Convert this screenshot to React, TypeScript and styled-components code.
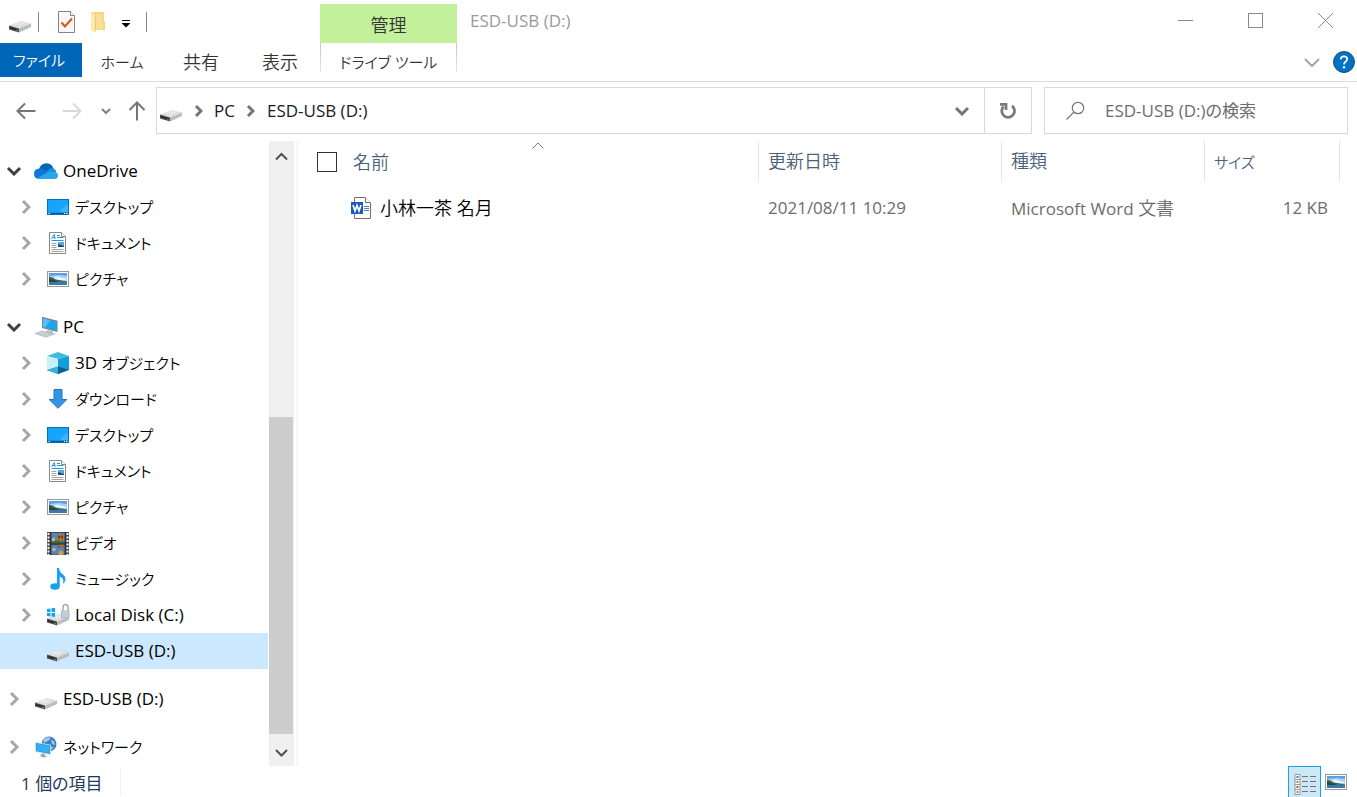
import React, { useState } from "react";
import styled, { createGlobalStyle, css } from "styled-components";

const Global = createGlobalStyle`
  *, *::before, *::after { box-sizing: border-box; }
  body { margin: 0; background: #fff; }
  button, input, table {
    font: inherit;
    color: inherit;
  }
  button {
    border: 0;
    padding: 0;
    background: none;
    cursor: default;
    white-space: nowrap;
  }
  svg { display: block; flex: none; }
`;

const Window = styled.div`
  display: flex;
  flex-direction: column;
  min-height: 100vh;
  overflow: hidden;
  background: #fff;
  color: #000;
  font-family: "Open Sans", "Noto Sans CJK JP", sans-serif;
  font-size: 17px;
  line-height: 24px;
  font-feature-settings: "palt";
`;

const kana = css`
  font-size: 15px;
  font-weight: 350;
`;

const Label = styled.span<{ $kana?: boolean }>`
  white-space: pre;
  ${(p) => p.$kana && kana}
`;

const Han = styled.span`
  font-size: 18px;
  font-weight: 350;
`;

/* ---------- ribbon ---------- */

const Ribbon = styled.header`
  display: grid;
  grid-template-columns: 320px 137px 1fr;
  height: 82px;
  border-bottom: 1px solid #dadbdc;
`;

const RibbonColumn = styled.div`
  display: grid;
  grid-template-rows: 43px 34px;
`;

const QuickAccess = styled.div`
  display: flex;
  align-items: center;
  padding-left: 9px;
`;

const Divider = styled.i<{ $before: number; $after: number }>`
  width: 1px;
  height: 20px;
  margin: 0 ${(p) => p.$after}px 0 ${(p) => p.$before}px;
  background: #868686;
`;

const QuickButton = styled.button<{ $width: number }>`
  display: flex;
  justify-content: center;
  width: ${(p) => p.$width}px;
`;

const Tabs = styled.div`
  display: flex;
  gap: 1px;
`;

const Tab = styled.button`
  width: 78px;
  padding-top: 4px;
  color: #333;
`;

const FileTab = styled(Tab)`
  ${kana}
  width: 82px;
  padding: 0 4px 0 0;
  background: #0067b8;
  color: #fff;
`;

const ContextTitle = styled.div`
  display: flex;
  align-items: center;
  justify-content: center;
  margin-top: 4px;
  padding-top: 2px;
  background: #c3f09b;
  color: #333;
`;

const ContextTab = styled(Tab)`
  ${kana}
  width: auto;
  background:
    linear-gradient(#c4c4c4, #e6e6e6) left top / 1px 29px no-repeat,
    linear-gradient(#c4c4c4, #e6e6e6) right top / 1px 29px no-repeat;
`;

const TitleBar = styled.div`
  display: flex;
  align-items: center;
  justify-content: space-between;
  padding: 0 0 2px 13px;
  color: #9a9a9a;
`;

const WindowControls = styled.div`
  display: flex;
  gap: 6px;
`;

const ControlButton = styled.button`
  display: grid;
  place-items: center;
  width: 64px;
  height: 40px;
`;

const RibbonTools = styled.div`
  display: flex;
  align-items: center;
  justify-content: flex-end;
  gap: 12px;
  padding: 4px 2px 0 0;
`;

/* ---------- address bar ---------- */

const AddressRow = styled.div`
  display: flex;
  padding: 5px 9px 7px 16px;
`;

const History = styled.div`
  display: grid;
  grid-template-columns: 46px 38px 27px 20px;
  align-items: center;
  justify-items: start;
  margin-right: 9px;
`;

const AddressBox = styled.div`
  display: flex;
  flex: 1;
  align-items: center;
  height: 47px;
  margin-right: 12px;
  padding-left: 3px;
  border: 1px solid #d9d9d9;
`;

const Crumb = styled.button`
  color: #1a1a1a;
`;

const CrumbArrow = styled.span`
  display: grid;
  place-items: center;
  width: 32px;
`;

const Dropdown = styled.button`
  display: grid;
  place-items: center;
  width: 44px;
  height: 100%;
  margin-left: auto;
`;

const Refresh = styled.button`
  display: grid;
  place-items: center;
  width: 47px;
  height: 100%;
  border-left: 1px solid #d9d9d9;
`;

const SearchBox = styled.label`
  display: flex;
  align-items: center;
  gap: 20px;
  width: 304px;
  padding-left: 20px;
  border: 1px solid #d9d9d9;
`;

const SearchInput = styled.input`
  flex: 1;
  min-width: 0;
  padding: 0;
  border: 0;
  outline: 0;
  background: none;
  &::placeholder { color: #6d6d6d; opacity: 1; }
`;

/* ---------- body ---------- */

const Body = styled.div`
  display: flex;
  flex: 1;
`;

const Tree = styled.nav`
  display: flex;
  flex-direction: column;
  gap: 12px;
  width: 268px;
  padding-top: 12px;
`;

const Group = styled.ul`
  margin: 0;
  padding: 0;
  list-style: none;
`;

const TreeRow = styled.button<{ $level: number; $selected?: boolean }>`
  display: flex;
  align-items: center;
  width: 100%;
  height: 36px;
  padding-left: ${(p) => 4 + p.$level * 12}px;
  background: ${(p) => (p.$selected ? "#cce8ff" : "none")};
`;

const Twisty = styled.span`
  display: grid;
  place-items: center;
  width: 20px;
  margin-right: 10px;
`;

const TreeIcon = styled.span`
  display: grid;
  place-items: center;
  width: 24px;
  margin-right: 5px;
`;

const ScrollBar = styled.div`
  display: flex;
  flex-direction: column;
  width: 25px;
  margin: 0 2px 0 1px;
  background: #f0f0f0;
`;

const ScrollButton = styled.button<{ $down?: boolean }>`
  display: grid;
  place-items: center;
  height: 32px;
  padding-top: ${(p) => (p.$down ? 6 : 0)}px;
`;

const ScrollTrack = styled.div`
  display: grid;
  flex: 1;
  grid-template-rows: 10fr 13fr;
`;

const Thumb = styled.div`
  grid-row: 2;
  width: 24px;
  background: #cdcdcd;
`;

const Files = styled.main`
  flex: 1;
  padding-left: 19px;
  border-left: 2px solid #f7f7f7;
`;

const FileTable = styled.table`
  width: 100%;
  table-layout: fixed;
  border-collapse: separate;
  border-spacing: 0;
`;

const Column = styled.col<{ $width?: number }>`
  ${(p) => p.$width && css`width: ${p.$width}px;`}
`;

const HeadCell = styled.th<{ $first?: boolean }>`
  position: relative;
  height: 41px;
  padding: ${(p) => (p.$first ? "0" : "0 0 0 9px")};
  border-right: 1px solid #e5e5e5;
  color: #4c607a;
  font-weight: 400;
  text-align: left;
`;

const NameHead = styled.div`
  display: flex;
  align-items: center;
  gap: 16px;
`;

const SelectAll = styled.input`
  appearance: none;
  width: 20px;
  height: 20px;
  margin: 0;
  border: 1px solid #333;
  background: #fff;
`;

const SortMark = styled.span`
  position: absolute;
  top: 0;
  left: 50%;
  transform: translateX(-50%);
`;

const Cell = styled.td<{ $right?: boolean }>`
  height: 52px;
  padding: 0 12px 0 9px;
  color: #6d6d6d;
  text-align: ${(p) => (p.$right ? "right" : "left")};
  white-space: nowrap;
`;

const NameCell = styled(Cell)`
  padding-left: 34px;
  color: #000;
`;

const FileName = styled.div`
  display: flex;
  align-items: center;
  gap: 8px;
`;

/* ---------- status bar ---------- */

const StatusBar = styled.footer`
  display: flex;
  align-items: center;
  height: 31px;
  padding: 0 10px 0 21px;
  color: #1e395b;
`;

const Count = styled.span`
  width: 100px;
  margin-right: auto;
  padding-top: 4px;
  border-right: 1px solid #f0f0f0;
`;

const ViewButton = styled.button<{ $active?: boolean }>`
  display: grid;
  place-items: center;
  height: 31px;
  ${(p) =>
    p.$active
      ? css`
          width: 33px;
          margin-right: 4px;
          padding-top: 6px;
          border: 1px solid #1ba1e8;
          border-bottom: 0;
          background: #cbe8f6;
        `
      : css`
          width: 22px;
        `}
`;

/* ---------- icons ---------- */

type ChevronProps = { dir: "up" | "down" | "right"; size: number; color: string; weight?: number };

const Chevron = ({ dir, size, color, weight = 2 }: ChevronProps) => {
  const long = size;
  const short = size / 2;
  const w = (dir === "right" ? short : long) + 4;
  const h = (dir === "right" ? long : short) + 4;
  const points =
    dir === "right"
      ? `2,2 ${short + 2},${short + 2} 2,${long + 2}`
      : dir === "down"
        ? `2,2 ${short + 2},${short + 2} ${long + 2},2`
        : `2,${short + 2} ${short + 2},2 ${long + 2},${short + 2}`;
  return (
    <svg width={w} height={h} viewBox={`0 0 ${w} ${h}`} fill="none" stroke={color} strokeWidth={weight}>
      <polyline points={points} />
    </svg>
  );
};

const DriveShape = () => (
  <>
    <path d="M0 5.500 12 1 22 3.500 10 8.500Z" fill="#dfdfdd" />
    <path d="M0 5.500 10 8.500V12.500L0 9.500Z" fill="#5a5a5a" />
    <path d="M10 8.500 22 3.500V7L10 12.500Z" fill="#bcbcba" />
    <path d="M.5 6.500 9.500 9V11.500L.5 8.700Z" fill="#333" />
    <path d="M7 9.500 9 10V11.500L7 11Z" fill="#2f9a58" />
    <path d="M6 4.500 12 2.500M9 5.500 15 3" stroke="#f0f0ef" strokeWidth="1" />
  </>
);

const DriveIcon = () => (
  <svg width="22" height="22" viewBox="0 0 22 22">
    <g transform="translate(0 9)">
      <DriveShape />
    </g>
  </svg>
);

const DiskIcon = () => (
  <svg width="24" height="24" viewBox="0 0 24 24">
    <g transform="translate(1 10)">
      <DriveShape />
    </g>
    <path d="M1 6 4.500 5.500V9H1ZM5.500 5.300 9 4.800V9H5.500ZM1 10H4.500V13.500L1 13ZM5.500 10H9V14L5.500 13.600Z" fill="#0ea5f0" />
    <path d="M17 8V4.500Q17 1.500 19.500 1.500T22 4.500V8" fill="none" stroke="#a9a9a9" strokeWidth="1.500" />
    <path d="M15 7.500H23.500V14.500L15 15.500Z" fill="#a9bccd" />
    <path d="M16 9H22.500M16 11H22.500M16 13H22.500" stroke="#d7e1ea" strokeWidth="1" />
  </svg>
);

const CheckDocIcon = () => (
  <svg width="18" height="22" viewBox="0 0 18 22">
    <path d="M.5.5H12.500L16.500 4.500V21.500H.5Z" fill="#f8f8fa" stroke="#858585" />
    <path d="M12.500.5V4.500H16.500" fill="#fff" stroke="#858585" />
    <path d="M3.500 11.500 7 15.500 14 7.500" fill="none" stroke="#e25012" strokeWidth="2" />
  </svg>
);

const FolderIcon = () => (
  <svg width="14" height="22" viewBox="0 0 14 22">
    <path d="M0 1H13V10L14 11V19H5L4 21 0 19Z" fill="#f7d581" />
    <path d="M0 1 4 3.500V21.500L0 19Z" fill="#ffe9b0" />
    <path d="M4 3.500 5 4V18L4 21Z" fill="#efc766" />
    <path d="M5 3H11V10L12 11V18H5Z" fill="#fcdf97" />
  </svg>
);

const MoreIcon = () => (
  <svg width="10" height="14" viewBox="0 0 10 14">
    <path d="M1 5.500H9" stroke="#000" />
    <path d="M0.500 8H9.500L5 12.500Z" fill="#000" />
  </svg>
);

const ArrowIcon = ({ dir, color }: { dir: "left" | "right" | "up"; color: string }) => {
  const angle = dir === "left" ? 0 : dir === "up" ? 90 : 180;
  return (
    <svg width="20" height="20" viewBox="0 0 20 20" fill="none" stroke={color} strokeWidth="2">
      <path d="M1.500 10H19.500M9 2.500 1.500 10 9 17.500" transform={`rotate(${angle} 10 10)`} />
    </svg>
  );
};

const RefreshIcon = () => (
  <svg width="18" height="18" viewBox="0 0 18 18" fill="none" stroke="#7a7a7a" strokeWidth="2.800">
    <path d="M13 3.800A6.400 6.400 0 1 1 4.500 4.500" />
    <path d="M1 2.400H7V8" />
  </svg>
);

const SearchIcon = () => (
  <svg width="20" height="20" viewBox="0 0 20 20" fill="none" stroke="#777" strokeWidth="1.200">
    <circle cx="13" cy="7" r="5.700" />
    <path d="M9 11 1.500 18.500" />
  </svg>
);

const HelpIcon = () => (
  <svg width="22" height="22" viewBox="0 0 22 22">
    <circle cx="11" cy="11" r="10.500" fill="#0072c6" stroke="#1f4e79" />
    <path d="M7.800 8.200Q7.800 5.300 11 5.300T14.200 8Q14.200 9.500 12.500 10.700T11 13.500" fill="none" stroke="#fff" strokeWidth="1.800" />
    <circle cx="11" cy="16.200" r="1.200" fill="#fff" />
  </svg>
);

const CloudIcon = () => (
  <svg width="24" height="16" viewBox="0 0 24 16">
    <path d="M5 6Q7 .5 12.500.3 18 .5 19.500 6L12 11 4 7Z" fill="#0364b8" />
    <path d="M5 16Q0 15.500 0 10.800 0 6 5.500 5.500 8.500 5 12 8L17 11 8 15Z" fill="#0f78d4" />
    <path d="M12.500 8.500Q14.500 5 18.500 5.300 22 6 22.300 9.500L14 12Z" fill="#1490df" />
    <path d="M3.500 15 15 8.800Q18 8.500 20.500 9 24 9.800 24 12.500 24 16 20 16H6Q4 16 3.500 15Z" fill="#28a8ea" />
  </svg>
);

const DesktopIcon = () => (
  <svg width="22" height="16" viewBox="0 0 22 16">
    <rect x=".5" y=".5" width="21" height="15" fill="#15a5fb" stroke="#0b6fb5" />
    <path d="M21 6Q14 9 13 13H21Z" fill="#3bb4fb" />
    <path d="M1 14.500H21" stroke="#0a5c99" strokeWidth="1.500" />
    <path d="M1.500 14.500H3M17 14.500H18M19 14.500H20.500" stroke="#fff" strokeWidth="1" />
  </svg>
);

const DocumentIcon = () => (
  <svg width="18" height="22" viewBox="0 0 18 22">
    <path d="M.5.5H12.500L16.500 4.500V21.500H.5Z" fill="#fff" stroke="#8a8a8a" />
    <path d="M12.500.5V4.500H16.500" fill="#fff" stroke="#8a8a8a" />
    <path d="M2.500 7 5.300 2.500 6.200 7M3.500 5.500H6M8 3.500H11M8 5.500H14.500M2.500 8.500H14.500" fill="none" stroke="#1c9be6" />
    <path d="M2.500 11.500H7.500M2.500 13.500H7.500M2.500 15.500H7.500M2.500 17.500H14.500M2.500 19.500H14.500" stroke="#a3a3a3" />
    <rect x="9" y="10" width="6" height="5" fill="#5aa6e0" />
    <path d="M9 12 15 14V15H9Z" fill="#1e4d6b" />
  </svg>
);

const PictureIcon = () => (
  <svg width="22" height="16" viewBox="0 0 22 16">
    <rect x=".5" y=".5" width="21" height="15" fill="#fff" stroke="#9a9a9a" />
    <rect x="2" y="2" width="18" height="12" fill="#a9d4f5" />
    <path d="M2 2H20V5L12 4 2 5Z" fill="#5b9fe3" />
    <path d="M7 7Q9 4.500 12 6T17 7L20 9H7Z" fill="#eaf6fd" />
    <path d="M2 5.500Q6 6.500 9 8.500L20 10.500V11.500H2Z" fill="#3f6248" />
    <path d="M2 8.500 9 10 20 11V14H2Z" fill="#3a79a8" />
    <path d="M2 8 8 9.500 12 11H2Z" fill="#2a453e" />
  </svg>
);

const PcIcon = () => (
  <svg width="24" height="22" viewBox="0 0 24 22">
    <path d="M8 .8 23.500 4.800V16L8 12Z" fill="#6f8796" />
    <path d="M9 2.300 22.300 5.800V14.500L9 11.200Z" fill="#1ea4ee" />
    <path d="M9 2.300 16 4.200 11 11.600 9 11.200Z" fill="#59c0f7" />
    <path d="M14 14 19 15V17L23 18 18 19 11 16Z" fill="#b9c2c8" />
    <path d="M1 17.500 8 15 19 18.500 12 21.300Z" fill="#d5dadd" stroke="#a5adb2" strokeWidth=".6" />
    <path d="M4 17.600 14 20.400M7 16.400 16.500 19.200" stroke="#98a1a6" strokeWidth=".7" strokeDasharray="1.500 1" />
  </svg>
);

const CubeIcon = () => (
  <svg width="22" height="22" viewBox="0 0 22 22">
    <path d="M11 0 22 4 11 7 0 4Z" fill="#41bce0" />
    <path d="M0 4 11 7V22L0 18Z" fill="#a6e6f2" />
    <path d="M11 7 22 4V18L11 22Z" fill="#12a0dc" />
    <path d="M11 14.500 22 17.800 11 22 0 18Z" fill="#0c5f8c" />
    <path d="M0 4 11 7V14.500L0 18Z" fill="#c7f2f8" />
    <path d="M0 18 11 14.500V22Z" fill="#38b3d6" />
  </svg>
);

const DownloadIcon = () => (
  <svg width="20" height="20" viewBox="0 0 20 20">
    <path d="M6 .5H14V10.500H18.800L10 19.300 1.200 10.500H6Z" fill="#3495e8" stroke="#2573bd" />
  </svg>
);

const VideoIcon = () => (
  <svg width="22" height="23" viewBox="0 0 22 23">
    <rect width="22" height="23" fill="#4b4b4b" />
    <path d="M1.500 1V23M20.500 1V23" stroke="#f2f2f2" strokeWidth="2" strokeDasharray="2 1.500" />
    <rect x="4" y="1" width="14" height="10.500" fill="#4a86c8" />
    <rect x="4" y="12.500" width="14" height="10" fill="#4a86c8" />
    <path d="M4 10 9 8.500 18 10V11.500H4Z" fill="#3d6b35" />
    <circle cx="13.500" cy="5.500" r="3.500" fill="#d98a20" />
    <path d="M12 2.500V8.500M15 2.500V8.500M10.500 5H16.500" stroke="#5a3113" strokeWidth="1" />
    <circle cx="6.500" cy="7.500" r="1.700" fill="#efb23a" />
    <path d="M10 12.500H18L15 16H12Z" fill="#71431c" />
    <path d="M11 13H17M12.500 15H15.500" stroke="#e8a02c" strokeWidth="1" />
    <circle cx="14" cy="21" r="2.500" fill="#e39a25" />
    <circle cx="7" cy="17.500" r="1.700" fill="#efb23a" />
    <path d="M18.200 0V23M3.800 0V23M4 12H18" stroke="#222" strokeWidth="1" />
  </svg>
);

const MusicIcon = () => (
  <svg width="18" height="22" viewBox="0 0 18 22">
    <ellipse cx="6" cy="18.500" rx="4.700" ry="3.300" fill="#18a0f0" />
    <path d="M8 0H10Q10.500 4 14 6.500 17.500 9 16 13.500L14 16Q15.500 10 10.700 8.500V18.500H8Z" fill="#18a0f0" />
  </svg>
);

const NetworkIcon = () => (
  <svg width="24" height="22" viewBox="0 0 24 22">
    <circle cx="15" cy="8" r="7.500" fill="#3c7fc0" />
    <path d="M9 4Q12 0 17 2L14 5 10 7ZM17 4 20 5 21 9 18 8Z" fill="#9fcbea" />
    <path d="M16 10 20 11 18 14 15 15Z" fill="#7fb5de" />
    <path d="M1.500 6.500 16.500 9V18.500L1.500 15.500Z" fill="#2b8fd0" stroke="#d4ebf8" strokeWidth=".8" />
    <path d="M2.500 7.500 15.500 9.800V17.300L2.500 14.700Z" fill="#35aef2" />
    <path d="M8 17.300 11 18V20L14 21 9 21.500 6 20Z" fill="#9dabb5" />
  </svg>
);

const WordIcon = () => (
  <svg width="21" height="22" viewBox="0 0 21 22">
    <path d="M3.500.5H14L19.500 6V21.500H3.500Z" fill="#fff" stroke="#7b6d6d" />
    <path d="M14.500.5V5.500H19.500" fill="#fff" stroke="#7b6d6d" />
    <path d="M13 9.500H18M13 11.500H18M13 13.500H18" stroke="#4784cf" />
    <rect y="5" width="12" height="12" fill="#185abd" />
    <path d="M2 8 4 14 6 8.500 8 14 10 8" fill="none" stroke="#fff" strokeWidth="1.700" />
  </svg>
);

const DetailsIcon = () => (
  <svg width="22" height="22" viewBox="0 0 22 22">
    <rect x="1" y=".5" width="5" height="20" fill="#fff" stroke="#9a9a9a" />
    <path d="M.5 5.500H6.500M.5 10.500H6.500M.5 15.500H6.500" stroke="#9a9a9a" />
    <path d="M2.500 3H4.500" stroke="#2f7fc4" strokeWidth="2" />
    <path d="M2.500 8H4.500" stroke="#a08a3e" strokeWidth="2" />
    <path d="M2.500 13H4.500" stroke="#b2481d" strokeWidth="2" />
    <path d="M2.500 18H4.500" stroke="#8a8a8a" strokeWidth="2" />
    <path d="M8 2.500H14M16 2.500H22M8 7.500H14M16 7.500H22M8 12.500H14M16 12.500H22M8 17.500H14M16 17.500H22" stroke="#7a6f73" />
  </svg>
);

/* ---------- data ---------- */

type Node = {
  id: string;
  lead?: string;
  label: string;
  icon: () => React.JSX.Element;
  kana?: boolean;
  state?: "open" | "closed" | "leaf";
};

const library: Node[] = [
  { id: "desktop", label: "デスクトップ", icon: DesktopIcon, kana: true },
  { id: "documents", label: "ドキュメント", icon: DocumentIcon, kana: true },
  { id: "pictures", label: "ピクチャ", icon: PictureIcon, kana: true },
];

const groups: { root: Node; children: Node[] }[] = [
  { root: { id: "onedrive", label: "OneDrive", icon: CloudIcon, state: "open" }, children: library },
  {
    root: { id: "pc", label: "PC", icon: PcIcon, state: "open" },
    children: [
      { id: "objects", lead: "3D ", label: "オブジェクト", icon: CubeIcon, kana: true },
      { id: "downloads", label: "ダウンロード", icon: DownloadIcon, kana: true },
      ...library,
      { id: "videos", label: "ビデオ", icon: VideoIcon, kana: true },
      { id: "music", label: "ミュージック", icon: MusicIcon, kana: true },
      { id: "c", label: "Local Disk (C:)", icon: DiskIcon },
      { id: "d", label: "ESD-USB (D:)", icon: DriveIcon, state: "leaf" },
    ],
  },
  { root: { id: "usb", label: "ESD-USB (D:)", icon: DriveIcon }, children: [] },
  { root: { id: "network", label: "ネットワーク", icon: NetworkIcon, kana: true }, children: [] },
];

const TreeItem = ({
  node,
  level,
  selected,
  onSelect,
}: {
  node: Node;
  level: number;
  selected: boolean;
  onSelect: () => void;
}) => {
  const Icon = node.icon;
  const state = node.state ?? "closed";
  return (
    <li>
      <TreeRow $level={level} $selected={selected} onClick={onSelect}>
        <Twisty>
          {state === "open" && <Chevron dir="down" size={12} color="#404040" weight={3} />}
          {state === "closed" && <Chevron dir="right" size={12} color="#a6a6a6" weight={3} />}
        </Twisty>
        <TreeIcon>
          <Icon />
        </TreeIcon>
        <Label>
          {node.lead}
          <Label $kana={node.kana}>{node.label}</Label>
        </Label>
      </TreeRow>
    </li>
  );
};

export default function App() {
  const [selected, setSelected] = useState("1-d");
  return (
    <Window>
      <Global />
      <Ribbon>
        <RibbonColumn>
          <QuickAccess>
            <DriveIcon />
            <Divider $before={7} $after={18} />
            <QuickButton $width={20} aria-label="プロパティ">
              <CheckDocIcon />
            </QuickButton>
            <QuickButton $width={42} aria-label="新しいフォルダー">
              <FolderIcon />
            </QuickButton>
            <QuickButton $width={14} aria-label="カスタマイズ">
              <MoreIcon />
            </QuickButton>
            <Divider $before={13} $after={0} />
          </QuickAccess>
          <Tabs>
            <FileTab>ファイル</FileTab>
            <Tab>
              <Label $kana>ホーム</Label>
            </Tab>
            <Tab>
              <Han>共有</Han>
            </Tab>
            <Tab>
              <Han>表示</Han>
            </Tab>
          </Tabs>
        </RibbonColumn>
        <RibbonColumn>
          <ContextTitle>
            <Han>管理</Han>
          </ContextTitle>
          <ContextTab>ドライブ ツール</ContextTab>
        </RibbonColumn>
        <RibbonColumn>
          <TitleBar>
            <Label>ESD-USB (D:)</Label>
            <WindowControls>
              <ControlButton aria-label="最小化">
                <svg width="15" height="15" viewBox="0 0 15 15">
                  <path d="M0 7.500H15" stroke="#8a8a8a" />
                </svg>
              </ControlButton>
              <ControlButton aria-label="最大化">
                <svg width="15" height="15" viewBox="0 0 15 15">
                  <rect x=".5" y=".5" width="14" height="14" fill="none" stroke="#8a8a8a" />
                </svg>
              </ControlButton>
              <ControlButton aria-label="閉じる">
                <svg width="15" height="15" viewBox="0 0 15 15">
                  <path d="M0 0 15 15M15 0 0 15" stroke="#8a8a8a" />
                </svg>
              </ControlButton>
            </WindowControls>
          </TitleBar>
          <RibbonTools>
            <button aria-label="リボンの展開">
              <Chevron dir="down" size={14} color="#a6a6a6" />
            </button>
            <button aria-label="ヘルプ">
              <HelpIcon />
            </button>
          </RibbonTools>
        </RibbonColumn>
      </Ribbon>

      <AddressRow>
        <History>
          <button aria-label="戻る">
            <ArrowIcon dir="left" color="#757575" />
          </button>
          <button aria-label="進む">
            <ArrowIcon dir="right" color="#d9d9d9" />
          </button>
          <button aria-label="最近表示した場所">
            <Chevron dir="down" size={8} color="#808080" weight={2} />
          </button>
          <button aria-label="上へ">
            <ArrowIcon dir="up" color="#757575" />
          </button>
        </History>
        <AddressBox>
          <DriveIcon />
          <CrumbArrow>
            <Chevron dir="right" size={10} color="#757575" weight={3} />
          </CrumbArrow>
          <Crumb>PC</Crumb>
          <CrumbArrow>
            <Chevron dir="right" size={10} color="#757575" weight={3} />
          </CrumbArrow>
          <Crumb>ESD-USB (D:)</Crumb>
          <Dropdown aria-label="以前の場所">
            <Chevron dir="down" size={12} color="#757575" weight={3} />
          </Dropdown>
          <Refresh aria-label="最新の情報に更新">
            <RefreshIcon />
          </Refresh>
        </AddressBox>
        <SearchBox>
          <SearchIcon />
          <SearchInput type="text" placeholder="ESD-USB (D:)の検索" aria-label="ESD-USB (D:)の検索" />
        </SearchBox>
      </AddressRow>

      <Body>
        <Tree>
          {groups.map(({ root, children }, i) => (
            <Group key={root.id}>
              {[root, ...children].map((node, j) => {
                const key = `${i}-${node.id}`;
                return (
                  <TreeItem
                    key={key}
                    node={node}
                    level={j === 0 ? 0 : 1}
                    selected={selected === key}
                    onSelect={() => setSelected(key)}
                  />
                );
              })}
            </Group>
          ))}
        </Tree>
        <ScrollBar>
          <ScrollButton aria-label="上にスクロール">
            <Chevron dir="up" size={11} color="#505050" weight={2} />
          </ScrollButton>
          <ScrollTrack>
            <Thumb />
          </ScrollTrack>
          <ScrollButton $down aria-label="下にスクロール">
            <Chevron dir="down" size={11} color="#505050" weight={2} />
          </ScrollButton>
        </ScrollBar>
        <Files>
          <FileTable>
            <colgroup>
              <Column $width={442} />
              <Column $width={243} />
              <Column $width={203} />
              <Column $width={135} />
              <Column />
            </colgroup>
            <thead>
              <tr>
                <HeadCell $first>
                  <SortMark>
                    <Chevron dir="up" size={11} color="#777" weight={1} />
                  </SortMark>
                  <NameHead>
                    <SelectAll type="checkbox" aria-label="すべて選択" />
                    <Han>名前</Han>
                  </NameHead>
                </HeadCell>
                <HeadCell>
                  <Han>更新日時</Han>
                </HeadCell>
                <HeadCell>
                  <Han>種類</Han>
                </HeadCell>
                <HeadCell>
                  <Label $kana>サイズ</Label>
                </HeadCell>
                <td />
              </tr>
            </thead>
            <tbody>
              <tr>
                <NameCell>
                  <FileName>
                    <WordIcon />
                    <Han>小林一茶 名月</Han>
                  </FileName>
                </NameCell>
                <Cell>2021/08/11 10:29</Cell>
                <Cell>
                  Microsoft Word <Han>文書</Han>
                </Cell>
                <Cell $right>12 KB</Cell>
                <td />
              </tr>
            </tbody>
          </FileTable>
        </Files>
      </Body>

      <StatusBar>
        <Count>1 個の項目</Count>
        <ViewButton $active aria-label="詳細表示">
          <DetailsIcon />
        </ViewButton>
        <ViewButton aria-label="大アイコン">
          <PictureIcon />
        </ViewButton>
      </StatusBar>
    </Window>
  );
}
